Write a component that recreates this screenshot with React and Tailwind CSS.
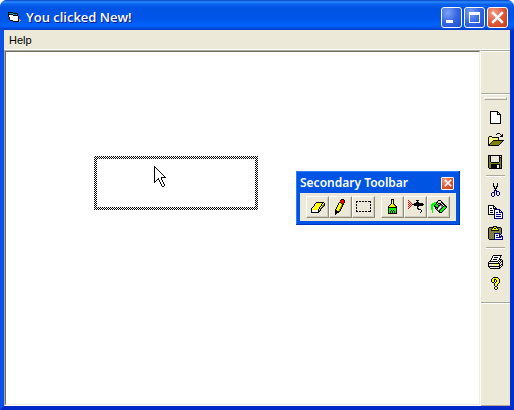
import React from 'react';

const PALETTE = {
  K: '#000000', W: '#ffffff', Y: '#ffff00', O: '#808000', G: '#c0c0c0', D: '#808080',
  N: '#000080', R: '#ff0000', L: '#00ff00', C: '#00a0a0', T: '#b09870', P: '#ece9d8',
};

function PixelIcon({ rows, className }) {
  const width = Math.max(...rows.map((r) => r.length));
  const paths = {};
  rows.forEach((row, y) => {
    [...row].forEach((c, x) => {
      if (PALETTE[c]) paths[c] = (paths[c] || '') + `M${x} ${y}h1v1h-1z`;
    });
  });
  return (
    <svg width={width} height={rows.length} viewBox={`0 0 ${width} ${rows.length}`} shapeRendering="crispEdges" className={className} aria-hidden="true">
      {Object.entries(paths).map(([c, d]) => <path key={c} d={d} fill={PALETTE[c]} />)}
    </svg>
  );
}

const ICONS = {
  form: [
    'KKKKK........',
    'KCCCCKKKKK...',
    'KKKKKCCCCK...',
    'KWWWWKKKKK...',
    'KWWWWWWWWWK..',
    '.KWWWWWWWWK..',
    '.KWWWWWWWWK..',
    '.KWWWWWWWWKT.',
    '..KKKWWWWWKTT',
    '.....KKKKKKT.',
  ],
  page: [
    '................',
    '..KKKKKKKK......',
    '..KWWWWWWKK.....',
    '..KWWWWWWKWK....',
    '..KWWWWWWKKKK...',
    '..KWWWWWWWWWK...',
    '..KWWWWWWWWWK...',
    '..KWWWWWWWWWK...',
    '..KWWWWWWWWWK...',
    '..KWWWWWWWWWK...',
    '..KWWWWWWWWWK...',
    '..KWWWWWWWWWK...',
    '..KWWWWWWWWWK...',
    '..KKKKKKKKKKK...',
    '................',
    '................',
  ],
  open: [
    '................',
    '.........KKK....',
    '........K...K.K.',
    '.............KK.',
    '.KKK........KKK.',
    'KYWYKKKKKKK.....',
    'KWYWYWYWYWK.....',
    'KYWYWYWYWYK.....',
    'KWYWYKKKKKKKKKKK',
    'KYWYKOOOOOOOOOK.',
    'KWYKOOOOOOOOOK..',
    'KYKOOOOOOOOOK...',
    'KKOOOOOOOOOK....',
    'KKKKKKKKKKK.....',
    '................',
    '................',
  ],
  save: [
    '................',
    'KKKKKKKKKKKKKK..',
    'KOKPPPPPPPPKPK..',
    'KOKPPPPPPPPKKK..',
    'KOKPPPPPPPPKOK..',
    'KOKPPPPPPPPKOK..',
    'KOKPPPPPPPPKOK..',
    'KOKPPPPPPPPKOK..',
    'KOOKKKKKKKKOOK..',
    'KOOOOOOOOOOOOK..',
    'KOOKKKKKKKKKOK..',
    'KOOKKKKKKPPKOK..',
    'KOOKKKKKKPPKOK..',
    'KOOKKKKKKPPKOK..',
    '.KKKKKKKKKKKKK..',
    '................',
  ],
  cut: [
    '................',
    '.....K...K......',
    '.....K...K......',
    '.....K...K......',
    '.....KK.KK......',
    '......K.K.......',
    '......KKK.......',
    '.......K........',
    '......NKN.......',
    '......N.NNN.....',
    '....NNN.N..N....',
    '...N..N.N..N....',
    '...N..N.N..N....',
    '...N..N..NN.....',
    '....NN..........',
    '................',
  ],
  copy: [
    '................',
    'KKKKKK..........',
    'KWWWWKK.........',
    'KWWWWKWK........',
    'KWKKWKKKK.......',
    'KWWWWWNNNNNN....',
    'KWKKKWNWWWWNN...',
    'KWWWWWNWWWWNWN..',
    'KWKKKWNWNNWNNNN.',
    'KWWWWWNWWWWWWWN.',
    'KKKKKKNWNNNNNWN.',
    '......NWWWWWWWN.',
    '......NWNNNNNWN.',
    '......NWWWWWWWN.',
    '......NNNNNNNNN.',
    '................',
  ],
  paste: [
    '.....KKKK.......',
    '.KKKKKYYKKKKK...',
    'KODOKYKKYKODOK..',
    'KDOKYYYYYYKODK..',
    'KODKKKKKKKKDOK..',
    'KDODODODODODOK..',
    'KODODODODODODK..',
    'KDODODNNNNNNOK..',
    'KODODONWWWWNN...',
    'KDODODNWNNWNWN..',
    'KODODONWWWWNNNN.',
    'KDODODNWNNNNNWN.',
    'KODODONWWWWWWWN.',
    '.KKKKKNNNNNNNNN.',
    '................',
    '................',
  ],
  print: [
    '................',
    '.....KKKKKKKKK..',
    '....KWWWWWWWK...',
    '....KWKKKKWWK...',
    '...KWWWWWWWK....',
    '...KWKKKKWWKKK..',
    '..KWWWWWWWKWKWK.',
    '.KKKKKKKKKWKWKK.',
    'KWPWPWPWPWKWKPK.',
    'KKKKKKKKKKKKPPK.',
    'KPPPPPPYYYPKPKK.',
    'KPPPPPPPPPPKKPK.',
    'KKKKKKKKKKKKPK..',
    '.KWPWPWPWPWKK...',
    '..KKKKKKKKKK....',
    '................',
  ],
  help: [
    '................',
    '.....KKKKK......',
    '....KYYYYYK.....',
    '...KYYKKYYYK....',
    '...KYYK.KYYK....',
    '...KYYK.KYYK....',
    '....KK.KYYYK....',
    '......KYYYK.....',
    '......KYYK......',
    '......KYYK......',
    '.......KK.......',
    '......KYYK......',
    '......KYYK......',
    '.......KK.......',
    '................',
    '................',
  ],
  eraser: [
    '................',
    '................',
    '................',
    '......KKKKKKKK..',
    '.....KYYYYYYKWK.',
    '....KWYYYYYKWOK.',
    '....KYYYYYYKOOK.',
    '...KYYYYYYKWOK..',
    '..KWYYYYYKWOK...',
    '.KWYYYYYYKOK....',
    '.KYYYYYYKWK.....',
    '.KWWWWWWKOK.....',
    '.KWWWWWWKK......',
    '.KKKKKKKK.......',
    '................',
    '................',
  ],
  pencil: [
    '........KKK.....',
    '.......KRRRK....',
    '.......RRRRK....',
    '......KKRRRK....',
    '.....KYYKRK.....',
    '.....KYYYKK.....',
    '....KYYYOK......',
    '....KYYYOK......',
    '...KYYYOK.......',
    '...KYYYOK.......',
    '..KYYYOK........',
    '..KKYYOK........',
    '..KKKKK.........',
    '..KKKK..........',
    '..KK............',
    '..K.............',
  ],
  marquee: [
    '................',
    '................',
    'KK.KK.KK.KK.KKK.',
    'K.............K.',
    '................',
    'K.............K.',
    'K.............K.',
    '................',
    'K.............K.',
    'K.............K.',
    '................',
    'K.............K.',
    'KK.KK.KK.KK.KKK.',
    '................',
    '................',
    '................',
  ],
  brush: [
    '......KKK.......',
    '......KYK.......',
    '......KYK.......',
    '......KYK.......',
    '......KYK.......',
    '.....KYYOK......',
    '....KYYYYOK.....',
    '...KYYYYYYOK....',
    '...KKKKKKKKK....',
    '...KLLLLLLLK....',
    '...KLLLLLLLK....',
    '...KLLKLKLLK....',
    '...KLKLKLKLK....',
    '...KLKLKLKLK....',
    '...KKKKKKKKK....',
    '................',
  ],
  airbrush: [
    '................',
    'R.......KKK.....',
    '.R.......K......',
    'R.R.....KKK.....',
    '.R.R..KKKKKKKKK.',
    'R.R.KKKKKKKKKKKK',
    '.R.R..KKKKKKKKK.',
    'R.R......KK.....',
    '.R.......K......',
    'R........KK.....',
    '..........KKK...',
    '.............K..',
    '.............K..',
    '............K...',
    '................',
    '................',
  ],
  fill: [
    '................',
    '.......KKK......',
    '......K...K.....',
    '...LLKK...KK....',
    '.LLLLK.KKK.KK...',
    'LLLLKLKDDKKWKK..',
    'LLLKLLLKKDDKWKK.',
    'LL.KKLLKDWDDKLKK',
    'LL..KKKDWWDKLLLK',
    'LL..KDKWWDKLLLK.',
    'LL...KDWDKLLLK..',
    '.L....KDKLLLK...',
    '.L.....KKLLK....',
    '.L......KKK.....',
    '................',
    '................',
  ],
  pointer: [
    'K............',
    'KK...........',
    'KWK..........',
    'KWWK.........',
    'KWWWK........',
    'KWWWWK.......',
    'KWWWWWK......',
    'KWWWWWWK.....',
    'KWWWWWWWK....',
    'KWWWWWWWWK...',
    'KWWWWWWWWWK..',
    'KWWWWWWKKKKK.',
    'KWWWKWWK.....',
    'KWWKKWWK.....',
    'KWK..KWWK....',
    'KK...KWWK....',
    'K.....KWWK...',
    '......KWWK...',
    '.......KWWK..',
    '.......KWWK..',
    '........KK...',
  ],
};

const SIDE_GROUPS = [
  [['page', 'New'], ['open', 'Open'], ['save', 'Save']],
  [['cut', 'Cut'], ['copy', 'Copy'], ['paste', 'Paste']],
  [['print', 'Print'], ['help', 'Help topics']],
];

const TOOL_GROUPS = [
  [['eraser', 'Eraser'], ['pencil', 'Pencil'], ['marquee', 'Select']],
  [['brush', 'Brush'], ['airbrush', 'Airbrush'], ['fill', 'Fill']],
];

const captionButton = 'flex size-[21px] items-center justify-center rounded-[3px] border border-white';
const blueButton = 'bg-radial-[at_30%_25%] from-[#7fa3f5] via-[#3567e4] to-[#1c48cf]';
const redButton = 'bg-radial-[at_30%_25%] from-[#f0a08a] via-[#e0583a] to-[#c33a14]';

function CloseGlyph({ size }) {
  return (
    <svg width={size} height={size} viewBox="0 0 11 11" aria-hidden="true">
      <path d="M1 1l9 9M10 1l-9 9" stroke="#fff" strokeWidth="2.2" />
    </svg>
  );
}

function TitleBar() {
  return (
    <header className="flex h-[30px] shrink-0 items-center justify-between bg-[linear-gradient(#0842c8_0,#2a8cff_2px,#0a63ee_4px,#0054e3_8px,#0055e8_18px,#0062fb_25px,#0058ee_27px,#003dc4_30px)] pt-1 pr-1.5 pl-2">
      <div className="flex items-center gap-[5px]">
        <PixelIcon rows={ICONS.form} />
        <h1 className="font-['Open_Sans','Noto_Sans',sans-serif] text-[13px] leading-5 font-semibold whitespace-nowrap text-white [text-shadow:1px_1px_#0a1883]">You clicked New!</h1>
      </div>
      <div className="flex gap-[2px]">
        <button aria-label="Minimize" className={`${captionButton} ${blueButton}`}>
          <svg width="13" height="13" aria-hidden="true"><path d="M1 9h7v3h-7z" fill="#fff" /></svg>
        </button>
        <button aria-label="Maximize" className={`${captionButton} ${blueButton}`}>
          <svg width="13" height="13" aria-hidden="true"><path fillRule="evenodd" d="M1 1h11v11h-11zM2 4v7h9v-7z" fill="#fff" /></svg>
        </button>
        <button aria-label="Close" className={`${captionButton} ${redButton}`}><CloseGlyph size={13} /></button>
      </div>
    </header>
  );
}

function SideToolbar() {
  return (
    <aside className="flex w-[29px] shrink-0 flex-col border-t border-b border-[#aca899]">
      <div className="h-[42px] border-t border-white" />
      <div className="flex flex-col border-y border-t-[#aca899] border-b-[#aca899] pb-[7px] shadow-[0_1px_#fff,inset_0_1px_#fff]">
        <div className="mx-[3px] mt-[3px] mb-[7px] h-[3px] border border-t-white border-r-[#aca899] border-b-[#aca899] border-l-white" />
        <div role="toolbar" aria-label="Main" className="flex flex-col items-center">
          {SIDE_GROUPS.map((group, i) => (
            <React.Fragment key={i}>
              {i > 0 && <div className="my-[2px] h-[2px] w-[19px] border-t border-b border-t-[#aca899] border-b-white" />}
              {group.map(([icon, label]) => (
                <button key={icon} aria-label={label} className="flex size-[22px] items-center justify-center">
                  <PixelIcon rows={ICONS[icon]} />
                </button>
              ))}
            </React.Fragment>
          ))}
        </div>
      </div>
    </aside>
  );
}

function FloatingToolbar() {
  return (
    <section className="absolute top-[119px] left-[290px] bg-[#0054e3] px-1 pb-1 shadow-[inset_-1px_-1px_#0038b8,inset_1px_1px_#2b7cf5]">
      <div className="flex h-[22px] items-center justify-between pt-[2px] pr-[2px]">
        <h2 className="font-['Noto_Sans','Open_Sans',sans-serif] text-[12px] leading-4 font-semibold whitespace-nowrap text-white">Secondary Toolbar</h2>
        <button aria-label="Close toolbar" className={`flex size-[13px] items-center justify-center rounded-[1px] border border-white ${redButton}`}><CloseGlyph size={8} /></button>
      </div>
      <div className="flex gap-1.5 bg-[#ece9d8] px-1.5 py-[3px]">
        {TOOL_GROUPS.map((group, i) => (
          <div key={i} className="flex">
            {group.map(([icon, label]) => (
              <button key={icon} aria-label={label} className="flex h-[22px] w-[23px] items-center justify-center border border-t-white border-r-[#8f8c7e] border-b-[#8f8c7e] border-l-white shadow-[inset_-1px_-1px_#d0cdbf]">
                <PixelIcon rows={ICONS[icon]} />
              </button>
            ))}
          </div>
        ))}
      </div>
    </section>
  );
}

export default function App() {
  return (
    <div className="min-h-screen bg-white">
      <div className="flex min-h-screen flex-col overflow-hidden rounded-t-[7px] bg-[#0046e0]">
        <TitleBar />
        <div className="flex flex-1 flex-col border-4 border-t-0 border-r-[#0030d0] border-b-[#0028c8] border-l-[#0b50e8] bg-[#ece9d8]">
          <nav className="flex h-5 shrink-0 items-center border-b border-white pl-[5px]">
            <button className="font-['Liberation_Sans',Arial,sans-serif] text-[11px] leading-4 text-black">Help</button>
          </nav>
          <div className="flex flex-1">
            <main className="flex flex-1 border border-t-[#aca899] border-r-white border-b-white border-l-[#aca899]">
              <div className="relative flex-1 border border-t-[#716f64] border-r-[#f1efe2] border-b-[#f1efe2] border-l-[#716f64] bg-white">
                <div className="absolute top-[104px] left-[88px] h-[54px] w-[164px] bg-[repeating-conic-gradient(#000_0_25%,#fff_0_50%)] bg-size-[2px_2px] p-[3px]">
                  <div className="h-full bg-white" />
                </div>
                <PixelIcon rows={ICONS.pointer} className="absolute top-[114px] left-[148px]" />
                <FloatingToolbar />
              </div>
            </main>
            <SideToolbar />
          </div>
        </div>
      </div>
    </div>
  );
}
